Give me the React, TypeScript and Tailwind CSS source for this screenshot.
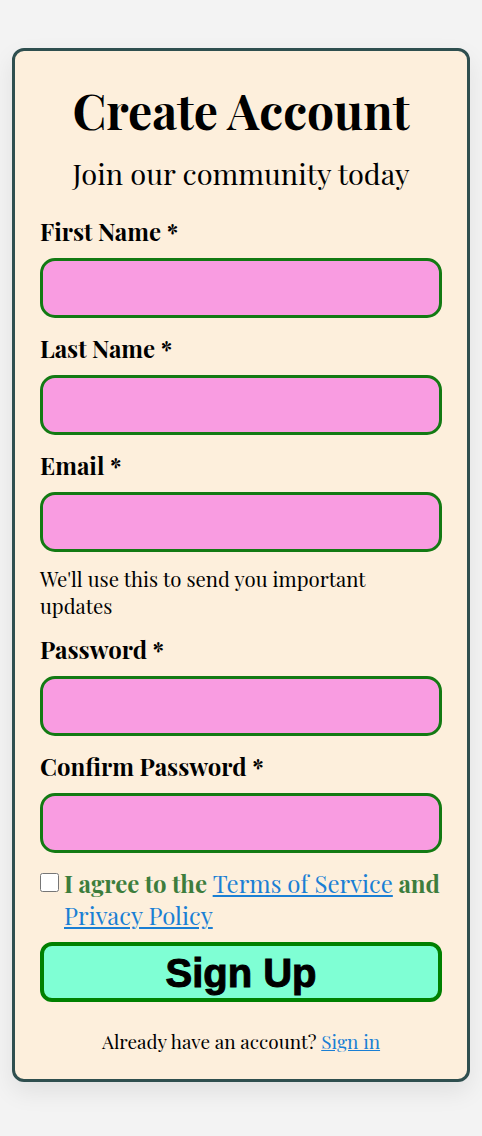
import React from "react";

const Field = ({ label, type = "text" }: { label: string; type?: string }) => (
  <div className="flex flex-col">
    <label className="mb-[11px] text-[24px] font-bold leading-[32px]">{label} *</label>
    <input
      type={type}
      className="h-[60px] w-full rounded-[15px] border-[3px] border-[#137a13] bg-[#f99ce1] px-3 outline-none"
    />
  </div>
);

export default function App() {
  return (
    <div className="min-h-screen bg-[#f3f3f3] pt-[48px] pb-[55px] px-3 font-['Playfair_Display','Liberation_Serif',serif] text-black">
      <div className="rounded-[12px] border-[3px] border-[#2f4f4f] bg-[#fdefdc] px-[25px] pt-[29px] pb-[24px] shadow-[0_10px_25px_rgba(0,0,0,0.08)]">
        <h1 className="text-center text-[48px] font-bold leading-[60px]">Create Account</h1>
        <p className="mt-[13px] text-center text-[29px] leading-[40px]">Join our community today</p>
        <div className="mt-[22px] flex flex-col gap-[14px]">
          <Field label="First Name" />
          <Field label="Last Name" />
          <div className="flex flex-col">
            <Field label="Email" type="email" />
            <p className="mt-[13px] max-w-[390px] text-[20.4px] leading-[27px]">
              We'll use this to send you important updates
            </p>
          </div>
          <Field label="Password" type="password" />
          <Field label="Confirm Password" type="password" />
        </div>
        <div className="mt-[14px] flex items-start gap-[5px]">
          <input type="checkbox" className="mt-[6px] h-[19px] w-[19px] shrink-0" />
          <label className="text-[24px] font-bold leading-[32px] text-[#3d7d3d]">
            I agree to the{" "}
            <a href="#" className="font-normal text-[#1a7fd4] underline">Terms of Service</a> and{" "}
            <a href="#" className="font-normal text-[#1a7fd4] underline">Privacy Policy</a>
          </label>
        </div>
        <button className="mt-[11px] h-[60px] w-full rounded-[12px] border-4 border-[#008000] bg-[#7fffd4] pt-[2px] font-['Liberation_Sans',Arial,sans-serif] text-[40px] font-bold leading-none text-black [-webkit-text-stroke:1px_black]">
          Sign Up
        </button>
        <p className="mt-[26px] text-center text-[19px] leading-[27px]">
          Already have an account?{" "}
          <a href="#" className="text-[#1a7fd4] underline">Sign in</a>
        </p>
      </div>
    </div>
  );
}
